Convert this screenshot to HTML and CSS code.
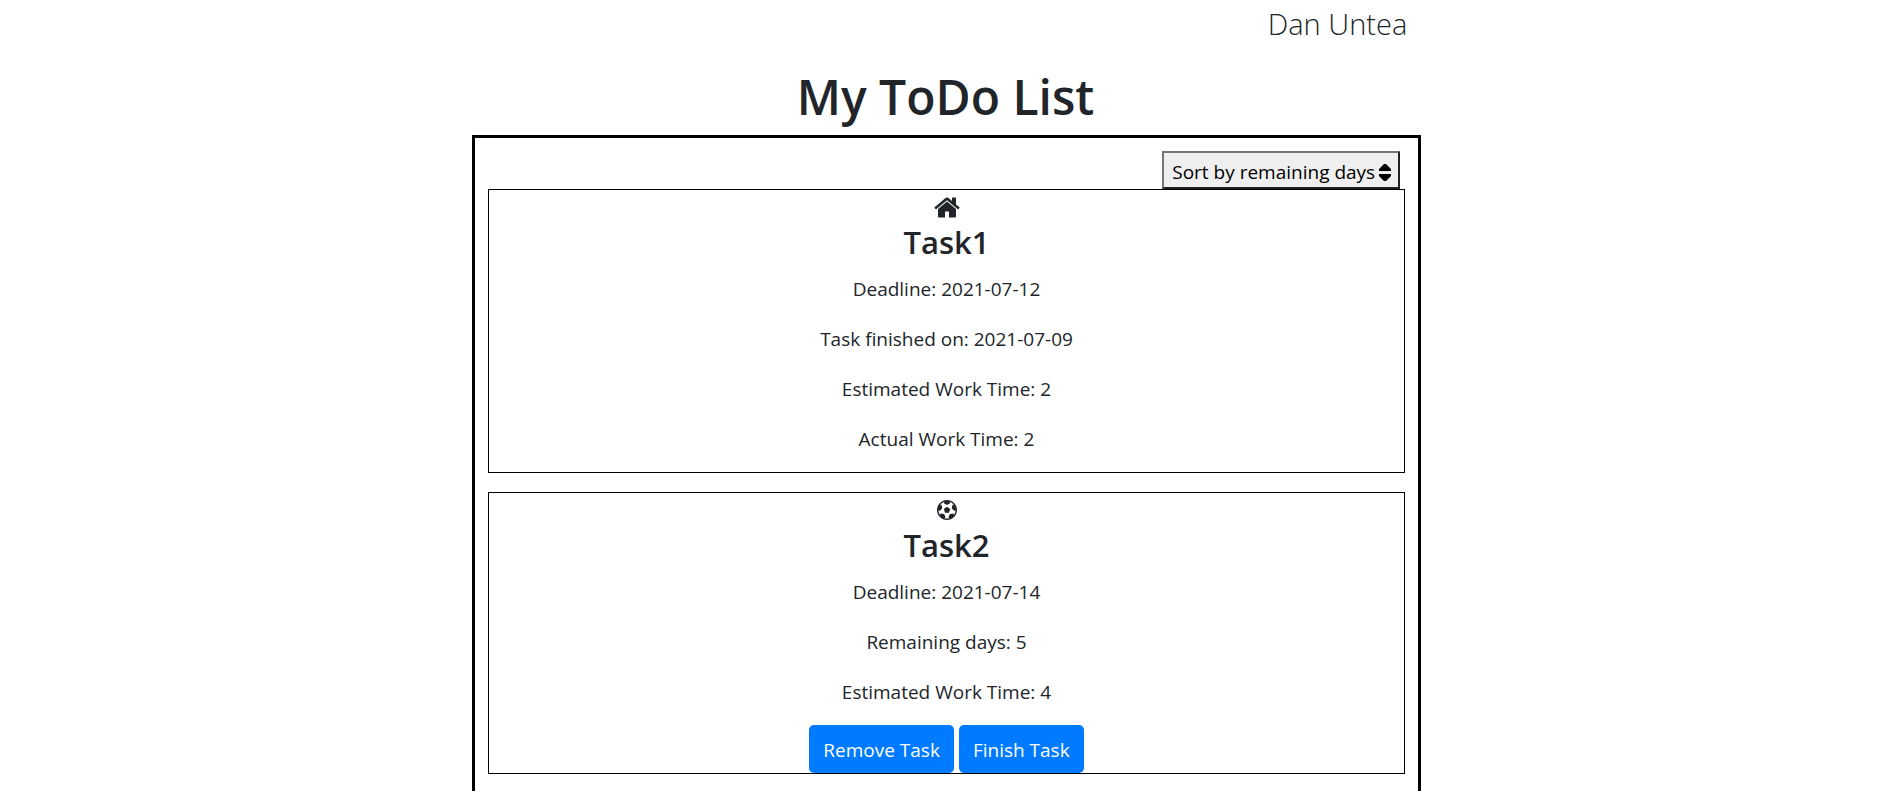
FILE: index.html
```html
<!DOCTYPE html>
<html lang="en">
<head>
<meta charset="utf-8">
<title>My ToDo List</title>
<link rel="stylesheet" href="styles.css">
</head>
<body>
<header class="user">Dan Untea</header>
<h1 class="title">My ToDo List</h1>
<main class="board">
  <div class="toolbar">
    <div class="sort">
      <select class="sort-select" aria-label="Sort tasks">
        <option>Sort by remaining days</option>
        <option>Sort by deadline</option>
      </select>
      <svg class="sort-arrows" viewBox="0 0 12 17" aria-hidden="true"><path d="M5 0H7L12 5V7H0V5zM0 10H12V12L7 17H5L0 12z"/></svg>
    </div>
  </div>
  <article class="task">
    <svg class="icon icon-home" viewBox="0 0 1664 1344" aria-hidden="true"><path transform="translate(0 -224)" d="M1408 992v480q0 26-19 45t-45 19h-384v-384h-256v384h-384q-26 0-45-19t-19-45v-480q0-1 .5-3t.5-3l575-474 575 474q1 2 1 6zm223-69l-62 74q-8 9-21 11h-3q-13 0-21-7l-692-577-692 577q-12 8-24 7-13-2-21-11l-62-74q-8-10-7-23.5t11-21.5l719-599q32-26 76-26t76 26l244 204v-195q0-14 9-23t23-9h192q14 0 23 9t9 23v408l219 182q10 8 11 21.5t-7 23.5z"/></svg>
    <h2 class="task-name">Task1</h2>
    <p class="line">Deadline: 2021-07-12</p>
    <p class="line">Task finished on: 2021-07-09</p>
    <p class="line">Estimated Work Time: 2</p>
    <p class="line">Actual Work Time: 2</p>
  </article>
  <article class="task">
    <svg class="icon icon-ball" viewBox="0 0 1792 1792" aria-hidden="true"><path d="M609 816l287-208 287 208-109 336h-355zm287-816q182 0 348 71t286 191 191 286 71 348-71 348-191 286-286 191-348 71-348-71-286-191-191-286-71-348 71-348 191-286 286-191 348-71zm619 1350q149-203 149-454v-3l-102 89-240-224 63-323 134 12q-150-206-389-282l53 124-287 159-287-159 53-124q-239 76-389 282l135-12 62 323-240 224-102-89v3q0 251 149 454l30-132 326 40 139 298-116 69q117 39 240 39t240-39l-116-69 139-298 326-40z"/></svg>
    <h2 class="task-name">Task2</h2>
    <p class="line">Deadline: 2021-07-14</p>
    <p class="line">Remaining days: 5</p>
    <p class="line">Estimated Work Time: 4</p>
    <div class="actions">
      <button class="btn" type="button">Remove Task</button>
      <button class="btn" type="button">Finish Task</button>
    </div>
  </article>
</main>
</body>
</html>
```
FILE: styles.css
```css
* { box-sizing: border-box; }
html { overflow: hidden; }
body {
  margin: 0;
  background: #fff;
  color: #212529;
  font: 400 19px/30px "Open Sans", "Noto Sans", sans-serif;
}
.user {
  margin-right: 25%;
  padding: 3px 11px 0 0;
  text-align: right;
  font-size: 29px;
  font-weight: 300;
  line-height: 42px;
}
.title {
  margin: 22px 0 8px;
  text-align: center;
  font-size: 48px;
  font-weight: 600;
  line-height: 60px;
}
.board {
  margin: 0 calc(25% - 3px) 0 calc(25% - 1px);
  padding: 13px;
  border: 3px solid #000;
}
.toolbar {
  display: flex;
  justify-content: flex-end;
  padding-right: 5px;
}
.sort { position: relative; }
.sort-select {
  display: block;
  width: 238px;
  height: 38px;
  padding: 4px 0 0 8px;
  border: 2px solid;
  border-color: #767676 #212121 #212121 #767676;
  border-radius: 0;
  background: #efefef;
  color: #000;
  font: inherit;
  appearance: none;
}
.sort-arrows {
  position: absolute;
  top: 13px;
  right: 9px;
  width: 12px;
  height: 17px;
  pointer-events: none;
}
.task {
  display: flex;
  flex-direction: column;
  align-items: center;
  margin-bottom: 19px;
  border: 1px solid #000;
  text-align: center;
}
.icon { fill: #212529; }
.icon-home { width: 26px; height: 21px; margin: 7px 0 3px; }
.icon-ball { width: 20px; height: 20px; margin: 7px 0 4px; }
.task-name {
  margin: 0 0 11px;
  font-size: 31px;
  font-weight: 600;
  line-height: 42px;
}
.line { margin: 0 0 20px; }
.line:last-of-type { margin-bottom: 18px; }
.actions {
  display: flex;
  gap: 5px;
}
.btn {
  padding: 10px 14px 8px;
  border: 0;
  border-radius: 5px;
  background: #007bff;
  color: #fff;
  font: inherit;
}
```
